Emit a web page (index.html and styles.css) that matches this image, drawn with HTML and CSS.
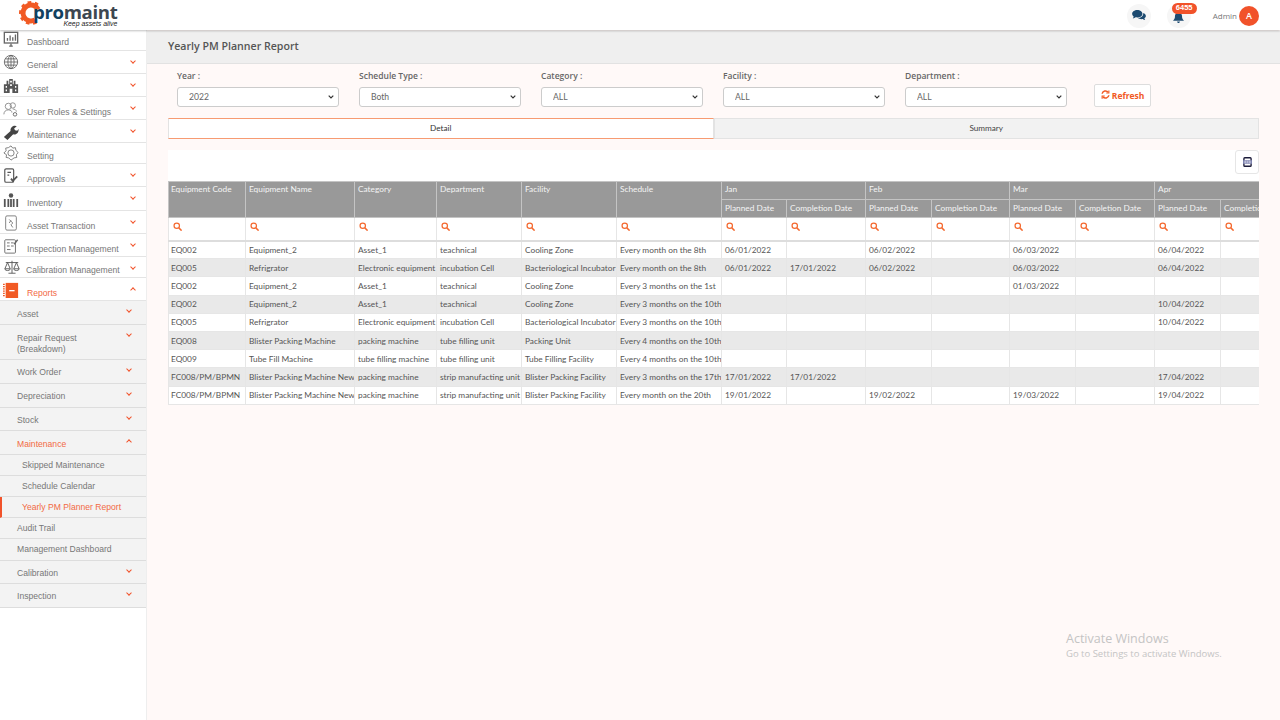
FILE: index.html
```html
<!DOCTYPE html>
<html lang="en">
<head>
    <meta charset="UTF-8">
    <title>Yearly PM Planner Report</title>
    <link rel="stylesheet" href="styles.css">
</head>
<body>

    <header class="topbar">
        <div class="logo">
            <svg class="logo-gear" viewBox="0 0 24 24" width="24" height="24" fill="none" stroke="#f15a24">
                <circle cx="12" cy="12" r="8" stroke-width="5" stroke-dasharray="38 12.3" transform="rotate(60 12 12)"/>
                <circle cx="12" cy="12" r="10.5" stroke-width="3" stroke-dasharray="3.5 3.5 3.5 3.5 3.5 3.5 3.5 3.5 3.5 3.5 3.5 3.5 3.5 20.5" transform="rotate(60 12 12)"/>
            </svg>
            <div class="logo-text">
                <div class="logo-name"><span class="logo-pro">pro</span>maint</div>
                <div class="logo-tag">Keep assets alive</div>
            </div>
        </div>
        <div class="topbar-right">
            <div class="round-icon">
                <svg viewBox="0 0 16 14" width="14" height="12"><path fill="#1c4a70" d="M6 0c3.300 0 6 1.900 6 4.400s-2.700 4.400-6 4.400c-.7 0-1.300-.1-1.900-.2-.9.7-2 1.200-3.400 1.300.6-.7 1-1.500 1.100-2.300C.7 6.800 0 5.700 0 4.400 0 1.900 2.700 0 6 0z"/><path fill="#1c4a70" d="M13 3.600c1.800.6 3 1.900 3 3.400 0 1.100-.6 2-1.700 2.700.1.800.5 1.500 1 2.100-1.200-.1-2.200-.5-3-1.200-1.900.4-4.300 0-5.500-1.200 3.300 0 6.300-2 6.200-5.800z"/></svg>
            </div>
            <div class="round-icon bell">
                <svg class="bell-icon" viewBox="0 0 14 14" width="11" height="11"><path fill="#1c4a70" d="M7 0c.6 0 1 .4 1 1 2.300.4 3.500 2.200 3.500 4.500 0 3 .8 4 2.500 5.500H0c1.700-1.500 2.500-2.500 2.500-5.500C2.500 3.200 3.700 1.400 6 1c0-.6.400-1 1-1zM5.200 12h3.600c0 1-.8 2-1.800 2s-1.800-1-1.800-2z"/></svg>
                <span class="badge">6455</span>
            </div>
            <div class="user-name">Admin</div>
            <div class="avatar">A</div>
        </div>
    </header>

    <div class="layout">
        <nav class="sidebar">
            <a class="nav-item h20"><svg class="nav-icon" viewBox="0 0 18 18"><rect x="1.500" y="1.500" width="15" height="12" fill="none" stroke="#666" stroke-width="1.500"/><path d="M5 11V8M8 11V5M11 11V7M14 11V4" stroke="#666" stroke-width="1.500"/><path d="M7 17h4M9 14v3" stroke="#666" stroke-width="1.500"/></svg>Dashboard</a>
            <a class="nav-item tight"><svg class="nav-icon" viewBox="0 0 18 18" fill="none" stroke="#666"><circle cx="9" cy="9" r="7.500"/><ellipse cx="9" cy="9" rx="3.500" ry="7.500"/><path d="M1.500 9h15M2.500 5.500h13M2.500 12.500h13M9 1.500v15"/></svg>General<i class="chev"></i></a>
            <a class="nav-item"><svg class="nav-icon" viewBox="0 0 18 18"><path fill="#555" d="M1 17V7h3V3h2v4h1V1h4v6h1V3h2v4h3v10z"/><path fill="#fff" d="M3 9h1.500v2H3zM8 3h2v2H8zM8 7h2v2H8zM13.500 9H15v2h-1.500zM3 13h1.500v2H3zM13.500 13H15v2h-1.500zM7.500 12h3v5h-3z"/></svg>Asset<i class="chev"></i></a>
            <a class="nav-item"><svg class="nav-icon" viewBox="0 0 18 18" fill="none" stroke="#888"><circle cx="6" cy="6" r="3.500"/><circle cx="11" cy="5" r="3"/><path d="M1 15c0-3 2-5 5-5s4 1.500 4 3M11 9c2 0 4 1 4 3"/><circle cx="13.500" cy="15" r="2" stroke="#666"/></svg>User Roles &amp; Settings<i class="chev"></i></a>
            <a class="nav-item"><svg class="nav-icon" viewBox="0 0 18 18"><path fill="#444" d="M1 14.500l7.500-6.500c-.5-3 1.500-6 5-6l2 .5-3 2.500 1 2 2.500.5 1.500-2c.5 4-2.500 7-6 6l-6.500 6.500z"/></svg>Maintenance<i class="chev"></i></a>
            <a class="nav-item h21 tight"><svg class="nav-icon" viewBox="0 0 18 18" fill="none" stroke="#777"><circle cx="9" cy="9" r="3.500"/><path d="M9 1l2 2.500 3-.5.500 3 2.500 2.500-2 2.500.5 3-3 .5L9 17l-2.500-2.500-3-.5.500-3L1 9l2.500-2.500-.5-3 3-.5z"/></svg>Setting</a>
            <a class="nav-item"><svg class="nav-icon" viewBox="0 0 18 18" fill="none" stroke="#555" stroke-width="1.300"><rect x="2" y="1" width="10" height="15" rx="1.500"/><path d="M5 5h4M5 8h2"/><path d="M9 12l2 2.500 5-5" stroke-width="2"/></svg>Approvals<i class="chev"></i></a>
            <a class="nav-item h24"><svg class="nav-icon" viewBox="0 0 18 18"><circle cx="9" cy="4" r="2.500" fill="#555"/><path fill="#555" d="M1 8h2v9H1zM5 8h2v9H5zM8 8h2v9H8zM11 8h2v9h-2zM15 8h2v9h-2z"/></svg>Inventory<i class="chev"></i></a>
            <a class="nav-item"><svg class="nav-icon" viewBox="0 0 18 18" fill="none" stroke="#777"><rect x="3" y="1" width="12" height="16" rx="1.500"/><path d="M7 5l4 4-2 2 2 3M7 9l2-3"/></svg>Asset Transaction<i class="chev"></i></a>
            <a class="nav-item"><svg class="nav-icon" viewBox="0 0 18 18" fill="none" stroke="#666"><rect x="2" y="2" width="12" height="15" rx="1"/><path d="M4.500 5.500h3M9 5.500h3M4.500 9h3M9 9h3M4.500 13h4"/><path d="M16.500 2l-4 5" stroke-width="1.500"/></svg>Inspection Management<i class="chev"></i></a>
            <a class="nav-item h21 calib"><svg class="nav-icon" viewBox="0 0 18 18" fill="none" stroke="#555"><path d="M9 2v14M5 16h8M2 4h14M4 4L1 11h6zM14 4l-3 7h6zM1 11a3 2 0 0 0 6 0M11 11a3 2 0 0 0 6 0"/></svg>Calibration Management<i class="chev"></i></a>
            <a class="nav-item active"><svg class="nav-icon" viewBox="0 0 18 18"><rect x="3" y="1" width="14" height="17" fill="#f15a24"/><path d="M1 2v15" stroke="#f15a24" stroke-width="2" stroke-dasharray="1.500 1"/><rect x="7" y="9" width="6" height="1.500" fill="#fff"/></svg>Reports<i class="chev up"></i></a>

            <div class="sub-nav">
                <a class="sub-item low">Asset<i class="chev"></i></a>
                <a class="sub-item two-line">Repair Request<br>(Breakdown)<i class="chev"></i></a>
                <a class="sub-item">Work Order<i class="chev"></i></a>
                <a class="sub-item">Depreciation<i class="chev"></i></a>
                <a class="sub-item h23">Stock<i class="chev"></i></a>
                <a class="sub-item low active">Maintenance<i class="chev up"></i></a>
                <a class="sub-item leaf">Skipped Maintenance</a>
                <a class="sub-item leaf">Schedule Calendar</a>
                <a class="sub-item leaf current">Yearly PM Planner Report</a>
                <a class="sub-item h21">Audit Trail</a>
                <a class="sub-item h22">Management Dashboard</a>
                <a class="sub-item h23">Calibration<i class="chev"></i></a>
                <a class="sub-item">Inspection<i class="chev"></i></a>
            </div>
        </nav>

        <main class="content">
            <div class="page-title">Yearly PM Planner Report</div>

            <div class="page-body">
                <div class="filters">
                    <div class="filter">
                        <label>Year :</label>
                        <select><option>2022</option></select>
                    </div>
                    <div class="filter">
                        <label>Schedule Type :</label>
                        <select><option>Both</option></select>
                    </div>
                    <div class="filter">
                        <label>Category :</label>
                        <select><option>ALL</option></select>
                    </div>
                    <div class="filter">
                        <label>Facility :</label>
                        <select><option>ALL</option></select>
                    </div>
                    <div class="filter">
                        <label>Department :</label>
                        <select><option>ALL</option></select>
                    </div>
                    <button class="refresh" type="button">
                        <svg viewBox="0 0 12 12" width="9" height="9" fill="none" stroke="#f15a24" stroke-width="2"><path d="M1.500 5a4.500 4.500 0 0 1 8-2M10.500 7a4.500 4.500 0 0 1-8 2"/><path d="M10.500 .5v3.500H7M1.500 11.500V8H5" stroke-width="1.500"/></svg>
                        Refresh
                    </button>
                </div>

                <div class="tabs">
                    <div class="tab selected">Detail</div>
                    <div class="tab">Summary</div>
                </div>

                <div class="grid-card">
                    <div class="grid-tools">
                        <button class="export" type="button">
                            <svg viewBox="0 0 10 11" width="9" height="10"><rect x="1" y=".75" width="8" height="9.500" rx="1" fill="none" stroke="#1c1c3a" stroke-width="1.500"/><rect x="0" y="3.500" width="10" height="4" fill="#7f84b0"/><path d="M1.500 4.700h2M4 4.700h2M6.500 4.700h2M1.500 6.300h2M4 6.300h2M6.500 6.300h2" stroke="#e8e8f2" stroke-width=".8"/></svg>
                        </button>
                    </div>
                    <div class="grid-scroll">
                        <table class="grid">
                            <colgroup>
                                <col class="c77"><col class="c109"><col class="c82"><col class="c85"><col class="c95"><col class="c105">
                                <col class="c65"><col class="c79"><col class="c66"><col class="c78"><col class="c66"><col class="c79"><col class="c66"><col class="c79">
                            </colgroup>
                            <thead>
                                <tr class="head-top">
                                    <th rowspan="2">Equipment Code</th>
                                    <th rowspan="2">Equipment Name</th>
                                    <th rowspan="2">Category</th>
                                    <th rowspan="2">Department</th>
                                    <th rowspan="2">Facility</th>
                                    <th rowspan="2">Schedule</th>
                                    <th colspan="2">Jan</th>
                                    <th colspan="2">Feb</th>
                                    <th colspan="2">Mar</th>
                                    <th colspan="2">Apr</th>
                                </tr>
                                <tr class="head-sub">
                                    <th>Planned Date</th><th>Completion Date</th>
                                    <th>Planned Date</th><th>Completion Date</th>
                                    <th>Planned Date</th><th>Completion Date</th>
                                    <th>Planned Date</th><th>Completion Date</th>
                                </tr>
                                <tr class="search-row" id="searchRow"></tr>
                            </thead>
                            <tbody id="gridBody"></tbody>
                        </table>
                    </div>
                </div>
            </div>
        </main>
    </div>

    <div class="watermark">
        <div class="wm-title">Activate Windows</div>
        <div class="wm-sub">Go to Settings to activate Windows.</div>
    </div>

    <script>
        let rows = [
            ['EQ002', 'Equipment_2', 'Asset_1', 'teachnical', 'Cooling Zone', 'Every month on the 8th', '06/01/2022', '', '06/02/2022', '', '06/03/2022', '', '06/04/2022', ''],
            ['EQ005', 'Refrigrator', 'Electronic equipment', 'incubation Cell', 'Bacteriological Incubator', 'Every month on the 8th', '06/01/2022', '17/01/2022', '06/02/2022', '', '06/03/2022', '', '06/04/2022', ''],
            ['EQ002', 'Equipment_2', 'Asset_1', 'teachnical', 'Cooling Zone', 'Every 3 months on the 1st', '', '', '', '', '01/03/2022', '', '', ''],
            ['EQ002', 'Equipment_2', 'Asset_1', 'teachnical', 'Cooling Zone', 'Every 3 months on the 10th', '', '', '', '', '', '', '10/04/2022', ''],
            ['EQ005', 'Refrigrator', 'Electronic equipment', 'incubation Cell', 'Bacteriological Incubator', 'Every 3 months on the 10th', '', '', '', '', '', '', '10/04/2022', ''],
            ['EQ008', 'Blister Packing Machine', 'packing machine', 'tube filling unit', 'Packing Unit', 'Every 4 months on the 10th', '', '', '', '', '', '', '', ''],
            ['EQ009', 'Tube Fill Machine', 'tube filling machine', 'tube filling unit', 'Tube Filling Facility', 'Every 4 months on the 10th', '', '', '', '', '', '', '', ''],
            ['FC008/PM/BPMN', 'Blister Packing Machine New', 'packing machine', 'strip manufacting unit', 'Blister Packing Facility', 'Every 3 months on the 17th', '17/01/2022', '17/01/2022', '', '', '', '', '17/04/2022', ''],
            ['FC008/PM/BPMN', 'Blister Packing Machine New', 'packing machine', 'strip manufacting unit', 'Blister Packing Facility', 'Every month on the 20th', '19/01/2022', '', '19/02/2022', '', '19/03/2022', '', '19/04/2022', '']
        ];

        let searchIcon = '<svg viewBox="0 0 12 12" width="9" height="9" fill="none" stroke="#f4692f" stroke-width="1.600"><circle cx="5" cy="5" r="3.600"/><path d="M7.800 7.800L11.500 11.500" stroke-width="2"/></svg>';

        let searchRow = document.querySelector( '#searchRow' );
        for( let i = 0; i < 14; i++ )
        {
            let cell = document.createElement( 'td' );
            cell.innerHTML = searchIcon;
            searchRow.appendChild( cell );
        }

        let gridBody = document.querySelector( '#gridBody' );
        rows.forEach(
            function( row )
            {
                let tr = document.createElement( 'tr' );
                row.forEach(
                    function( value )
                    {
                        let cell = document.createElement( 'td' );
                        cell.textContent = value;
                        tr.appendChild( cell );
                    }
                );
                gridBody.appendChild( tr );
            }
        );
    </script>
</body>
</html>
```

FILE: styles.css
```css
* {
    box-sizing: border-box;
}

html, body {
    margin: 0;
    height: 720px;
    overflow: hidden;
}

body {
    font-family: "Liberation Sans", Arial, sans-serif;
    font-size: 8.5px;
    color: #666;
    background-color: #fff9f8;
}

/* top bar */
.topbar {
    height: 30px;
    background: #fff;
    display: flex;
    align-items: center;
    justify-content: space-between;
    padding: 1px 21px 0 19px;
    box-shadow: 0 1px 2px rgba(0,0,0,0.25);
    position: relative;
}

.logo {
    display: flex;
    align-items: flex-start;
    height: 29px;
}

.logo-gear {
    margin-right: -10px;
}

.logo-text {
    padding-top: 3px;
}

.logo-name {
    font-family: "Open Sans", sans-serif;
    font-size: 18.6px;
    font-weight: 700;
    line-height: 16px;
    color: #3d4750;
    letter-spacing: -0.35px;
}

.logo-pro {
    color: #12415f;
}

.logo-tag {
    font-size: 6.9px;
    font-style: italic;
    line-height: 7px;
    color: #222;
    text-align: right;
}

.topbar-right {
    display: flex;
    align-items: center;
}

.round-icon {
    width: 24px;
    height: 24px;
    border-radius: 50%;
    background: #f6f6f6;
    display: flex;
    align-items: center;
    justify-content: center;
    margin-right: 16px;
    position: relative;
}

.round-icon.bell {
    margin-right: 22px;
}

.bell-icon {
    margin-top: 4px;
}

.badge {
    position: absolute;
    top: -1px;
    left: 5px;
    width: 25px;
    height: 11px;
    border-radius: 6px;
    background: #f1522a;
    color: #fff;
    font-size: 7.5px;
    font-weight: bold;
    line-height: 10px;
    text-align: center;
}

.user-name {
    font-family: "Open Sans", sans-serif;
    font-size: 8px;
    color: #777;
    margin-right: 2px;
}

.avatar {
    width: 20px;
    height: 20px;
    border-radius: 50%;
    background: #f1522a;
    color: #fff;
    font-family: "Open Sans", sans-serif;
    font-size: 9px;
    font-weight: 600;
    line-height: 20px;
    text-align: center;
}

/* layout */
.layout {
    display: flex;
    height: 690px;
}

.sidebar {
    width: 147px;
    flex-shrink: 0;
    background: #fff;
    padding-top: 1px;
    border-right: 1px solid #eee;
}

.nav-item {
    height: 23px;
    display: flex;
    align-items: center;
    position: relative;
    padding: 8px 0 0 5px;
    border-bottom: 1px solid #e4e4e4;
    color: #777;
    font-size: 8.6px;
}

.nav-item.h20 {
    height: 20px;
    padding-top: 2px;
}

.nav-item.h21 {
    height: 21px;
}

.nav-item.h24 {
    height: 24px;
}

.nav-item.tight {
    padding-top: 6px;
}

.nav-item.calib {
    padding-top: 6px;
}

.nav-item.calib .nav-icon {
    margin: -6px 6px 0 -1px;
}

.nav-item.active {
    color: #f26a45;
}

.nav-icon {
    width: 16px;
    height: 16px;
    margin: -6px 8px 0 -2px;
    flex-shrink: 0;
}

.chev {
    position: absolute;
    right: 11px;
    top: 8px;
    width: 4px;
    height: 4px;
    border-right: 1.300px solid #f1522a;
    border-bottom: 1.300px solid #f1522a;
    transform: rotate(45deg);
}

.chev.up {
    top: 10px;
    transform: rotate(225deg);
}

.sub-nav {
    background: #f3f3f3;
}

.sub-item {
    display: block;
    height: 24px;
    line-height: 24px;
    padding-left: 17px;
    position: relative;
    border-bottom: 1px solid #ddd;
    color: #777;
    font-size: 8.6px;
}

.sub-item.low {
    line-height: 26px;
}

.sub-item .chev {
    right: 15px;
    top: 7px;
}

.sub-item .chev.up {
    top: 9px;
}

.sub-item.two-line {
    height: 35px;
    line-height: 11px;
    padding-top: 8px;
}

.sub-item.h21 {
    height: 21px;
    line-height: 21px;
}

.sub-item.h22 {
    height: 22px;
    line-height: 21px;
}

.sub-item.h23 {
    height: 23px;
}

.sub-item.active {
    color: #f26a45;
}

.sub-item.leaf {
    height: 21px;
    line-height: 20px;
    padding-left: 22px;
}

.sub-item.current {
    color: #f26a45;
    border-left: 2px solid #f1522a;
    padding-left: 20px;
}

/* main */
.content {
    flex: 1;
    min-width: 0;
}

.page-title {
    height: 33px;
    margin-top: 1px;
    background: #efefef;
    border-bottom: 1px solid #e2e2e2;
    padding-left: 21px;
    font-family: "Open Sans", sans-serif;
    font-size: 10.6px;
    font-weight: 600;
    line-height: 31px;
    color: #555;
}

.page-body {
    padding: 0 21px;
}

.filters {
    display: flex;
    align-items: flex-end;
    padding-left: 9px;
    height: 43px;
}

.filter {
    width: 162px;
    margin-right: 20px;
}

.filter label {
    display: block;
    font-family: "Open Sans", sans-serif;
    font-size: 8.5px;
    font-weight: 600;
    color: #666;
    height: 16px;
    line-height: 10px;
}

.filter select {
    display: block;
    width: 162px;
    height: 20px;
    border: 1px solid #ccc;
    border-radius: 3px;
    background: #fff url("data:image/svg+xml,%3Csvg xmlns='http://www.w3.org/2000/svg' viewBox='0 0 6 4'%3E%3Cpath d='M.7.7L3 3 5.300.7' fill='none' stroke='%23333' stroke-width='1.200'/%3E%3C/svg%3E") no-repeat right 4px center / 6px 4px;
    color: #666;
    font-family: "Lato", sans-serif;
    font-size: 8.6px;
    padding: 0 0 1px 11px;
    outline: 0;
    appearance: none;
}

.refresh {
    width: 57px;
    height: 23px;
    margin: 0 0 0 7px;
    border: 1px solid #ddd;
    border-radius: 2px;
    background: #fff;
    color: #f15a24;
    font-family: "Open Sans", sans-serif;
    font-size: 8.5px;
    font-weight: 700;
    padding: 0;
}

.tabs {
    display: flex;
    height: 21px;
    margin-top: 11px;
}

.tab {
    flex: 1;
    background: #f2f2f2;
    border: 1px solid #e3e3e3;
    font-family: "Lato", sans-serif;
    font-size: 8.2px;
    line-height: 19px;
    text-align: center;
    color: #444;
}

.tab.selected {
    background: #fff;
    border-top: 1.500px solid #f79b72;
    border-bottom: 1.500px solid #f79b72;
    color: #333;
}

.grid-card {
    margin-top: 11px;
    background: #fff;
}

.grid-tools {
    height: 31px;
    display: flex;
    justify-content: flex-end;
}

.export {
    width: 24px;
    height: 24px;
    border: 1px solid #e6e6e6;
    border-radius: 3px;
    background: #fff;
    padding: 0;
    display: flex;
    align-items: center;
    justify-content: center;
}

.grid-scroll {
    overflow: hidden;
    background: #fff9f8;
}

.grid {
    border-collapse: collapse;
    table-layout: fixed;
    width: 1131px;
    font-family: "Lato", sans-serif;
    font-size: 8.3px;
}

.c65 { width: 65px; }
.c66 { width: 66px; }
.c77 { width: 77px; }
.c78 { width: 78px; }
.c79 { width: 79px; }
.c82 { width: 82px; }
.c85 { width: 85px; }
.c95 { width: 95px; }
.c105 { width: 105px; }
.c109 { width: 109px; }

.grid th {
    background: #999;
    color: #f4f4f4;
    font-weight: 400;
    text-align: left;
    vertical-align: top;
    border: 1px solid #c4c4c4;
    padding: 3px 3px 0;
    white-space: nowrap;
    overflow: hidden;
}

.head-top th {
    height: 18px;
    padding-top: 2px;
}

.head-top th:first-child,
.grid tbody td:first-child {
    padding-left: 2px;
}

.head-sub th {
    height: 18px;
}

.search-row td {
    height: 23px;
    background: #fff;
    border: 1px solid #e6e6e6;
    border-bottom: 2px solid #ddd;
    padding: 0 0 3px 4px;
}

.grid tbody td {
    height: 18.200px;
    background: #fff;
    border: 1px solid #e6e6e6;
    padding: 0 3px;
    color: #555;
    white-space: nowrap;
    overflow: hidden;
}

.grid tbody tr:nth-child(even) td {
    background: #e9e9e9;
}

/* overlay */
.watermark {
    position: absolute;
    left: 1066px;
    top: 631px;
    font-family: "Open Sans", sans-serif;
    color: #c4c4c4;
}

.wm-title {
    font-size: 12.500px;
    line-height: 16px;
}

.wm-sub {
    font-size: 9.500px;
    line-height: 13px;
}
```
